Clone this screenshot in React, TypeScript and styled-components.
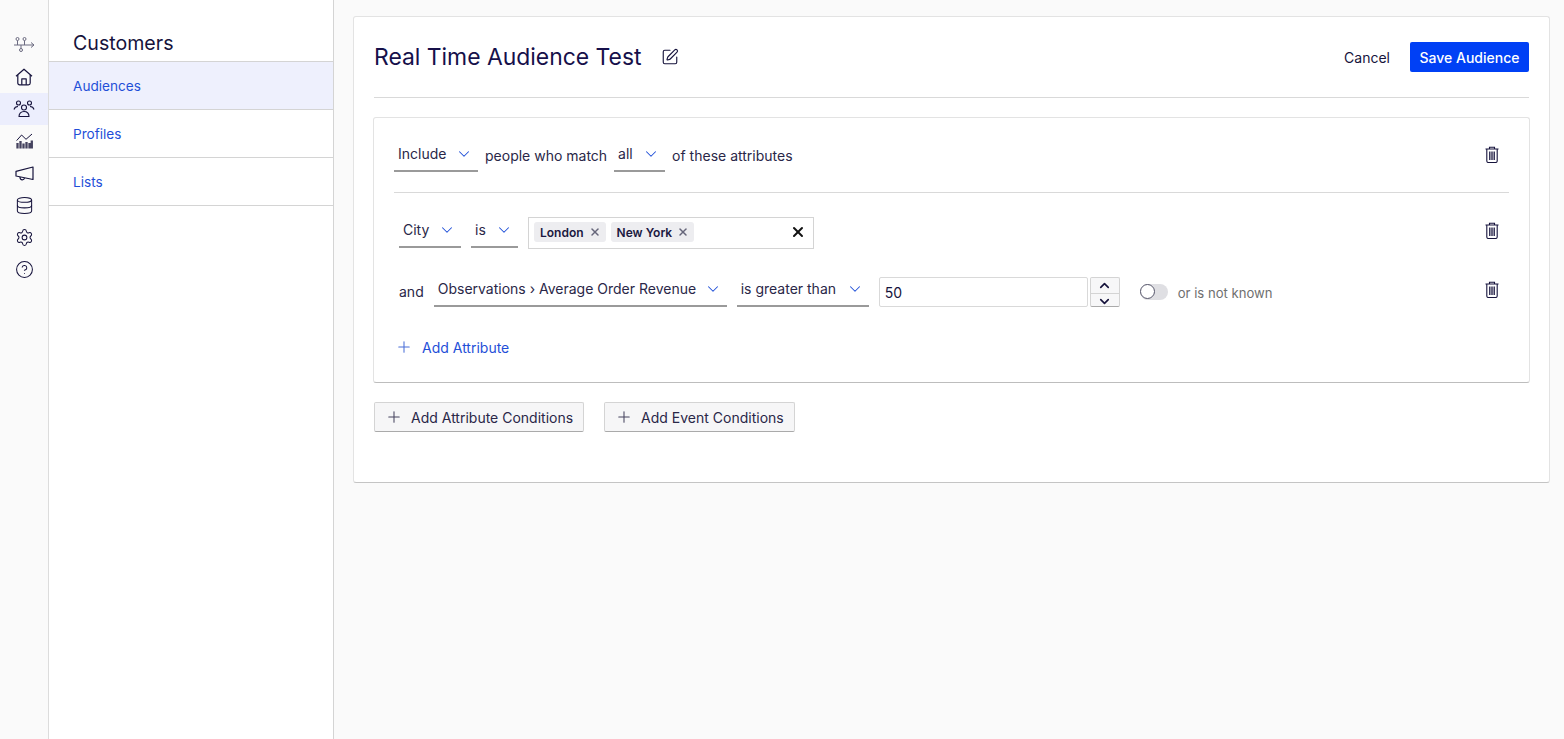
import React from "react";
import styled, { createGlobalStyle } from "styled-components";
import { ChevronDown, ChevronUp, CircleHelp, Database, Plus, Settings, SquarePen, X } from "lucide-react";

const GlobalStyle = createGlobalStyle`
  html, body { margin: 0; height: 100%; }
  body {
    background: #fafafa;
    color: #16133c;
    font-family: Inter, "Noto Sans", sans-serif;
    font-size: 14px;
    overflow: hidden;
  }
`;

const FlowIcon = () => (
  <svg width="22" height="18" viewBox="0 0 22 18" fill="none" stroke="#6b6a80" strokeWidth="1">
    <path d="M1 9h20M18 6.500l3 2.500-3 2.500" />
    <circle cx="4.500" cy="3" r="1.500" />
    <circle cx="11.500" cy="3" r="1.500" />
    <circle cx="8" cy="14" r="1.500" />
    <path d="M4.500 4.500V9M11.500 4.500V9M8 9v3.500" />
  </svg>
);

const HomeIcon = () => (
  <svg width="18" height="18" viewBox="0 0 18 18" fill="none" stroke="#16133c" strokeWidth="1.200" strokeLinejoin="round">
    <path d="M1 8.300 9 1.200l8 7.100" />
    <path d="M2.800 7v8a1.800 1.800 0 0 0 1.800 1.800h8.800a1.800 1.800 0 0 0 1.800-1.800V7" />
    <path d="M6.800 16.800v-6h4.400v6" />
  </svg>
);

const PeopleIcon = () => (
  <svg width="22" height="18" viewBox="0 0 22 18" fill="none" stroke="#16133c" strokeWidth="1.100">
    <circle cx="5.500" cy="3" r="2" />
    <circle cx="16.500" cy="3" r="2" />
    <circle cx="11" cy="7.500" r="2.500" />
    <path d="M1 9.500c.5-2 2-3 4-3M21 9.500c-.5-2-2-3-4-3" />
    <path d="M6 16.500c0-3 2-5 5-5s5 2 5 5z" strokeLinejoin="round" />
  </svg>
);

const ChartIcon = () => (
  <svg width="18" height="16" viewBox="0 0 18 16" fill="none" stroke="#16133c" strokeWidth="1">
    <path d="M1.600 7.600 6.600 2 11 6.300 17 1" />
    <path d="M2.500 15.500V10M5.500 15.500V8M8.500 15.500V10.500M11.500 15.500V9M14.500 15.500V10M16.800 15.500V7.500" strokeWidth="2.300" stroke="#45435f" />
  </svg>
);

const MegaphoneIcon = () => (
  <svg width="19" height="15" viewBox="0 0 19 15" fill="none" stroke="#16133c" strokeWidth="1.200" strokeLinejoin="round">
    <path d="M18 1v12.500L1 10V5.300z" />
    <path d="M5 11c0 2 1 2.800 2.300 2.800 1.200 0 2-.8 2.200-1.800" />
  </svg>
);

const TrashIcon = () => (
  <svg width="14" height="17" viewBox="0 0 14 17" fill="none" stroke="#16133c" strokeWidth="1.100">
    <path d="M.5 3h13M4.500 3V1.200h5V3" />
    <path d="M1.800 3v12a1.500 1.500 0 0 0 1.500 1.500h7.400a1.500 1.500 0 0 0 1.500-1.500V3" />
    <path d="M4.800 5.500v8.500M7 5.500v8.500M9.200 5.500v8.500" strokeWidth="1.300" />
  </svg>
);

const Page = styled.div`
  display: flex;
  height: 739px;
`;

const Rail = styled.nav`
  box-sizing: border-box;
  width: 49px;
  flex: none;
  padding-top: 29px;
  background: #fafafa;
  border-right: 1px solid #dcdcdc;
  display: flex;
  flex-direction: column;
`;

const RailItem = styled.div<{ $active?: boolean }>`
  height: 32px;
  display: flex;
  align-items: center;
  justify-content: center;
  color: #16133c;
  background: ${(p) => (p.$active ? "#eceefd" : "transparent")};
`;

const SideNav = styled.aside`
  box-sizing: border-box;
  width: 285px;
  flex: none;
  background: #fff;
  border-right: 1px solid #d4d4d4;
`;

const SideTitle = styled.h2`
  margin: 0;
  height: 62px;
  box-sizing: border-box;
  padding: 31px 0 0 24px;
  font-size: 19.6px;
  line-height: 24px;
  font-weight: 400;
  border-bottom: 1px solid #d4d4d4;
`;

const SideLink = styled.a<{ $active?: boolean }>`
  box-sizing: border-box;
  display: flex;
  align-items: center;
  height: 48px;
  padding-left: 24px;
  font-size: 13.6px;
  color: #1f4fd8;
  border-bottom: 1px solid #d4d4d4;
  background: ${(p) => (p.$active ? "#eef0fd" : "#fff")};
`;

const Main = styled.main`
  flex: 1;
  padding: 16px 14px 0 19px;
`;

const Card = styled.section`
  box-sizing: border-box;
  height: 467px;
  background: #fff;
  border: 1px solid #e3e3e3;
  border-bottom: 1px solid #c4c4c4;
  border-radius: 3px;
  padding: 25px 19px 0 20px;
`;

const Header = styled.header`
  display: flex;
  align-items: center;
  height: 30px;
  margin-right: 1px;
  padding-bottom: 25px;
  border-bottom: 1px solid #d9d9d9;
`;

const Title = styled.h1`
  margin: 0;
  font-size: 22.9px;
  line-height: 30px;
  font-weight: 400;
  color: #16104a;
`;

const EditButton = styled.span`
  display: flex;
  margin-left: 20px;
`;

const HeaderActions = styled.div`
  margin-left: auto;
  display: flex;
  align-items: center;
  gap: 20px;
`;

const CancelLink = styled.span`
  font-size: 14px;
`;

const PrimaryButton = styled.button`
  height: 30px;
  width: 119px;
  border: 0;
  padding: 0;
  border-radius: 2px;
  background: #0040f5;
  color: #fff;
  font: 500 14px Inter, sans-serif;
`;

const ConditionBox = styled.div`
  box-sizing: border-box;
  height: 266px;
  margin: 19px 0 0 -1px;
  padding: 0 20px 0 20px;
  border: 1px solid #e3e3e3;
  border-bottom: 1px solid #bdbdbd;
  border-radius: 3px;
`;

const GroupRow = styled.div`
  display: flex;
  align-items: flex-start;
  height: 75px;
  box-sizing: border-box;
  padding-top: 23px;
  border-bottom: 1px solid #d9d9d9;
`;

const Row = styled.div<{ $top: number }>`
  display: flex;
  align-items: flex-start;
  margin-top: ${(p) => p.$top}px;
  padding-left: 5px;
`;

const Select = styled.div<{ $width: number; $gap?: number }>`
  box-sizing: border-box;
  width: ${(p) => p.$width}px;
  height: 31px;
  margin-right: ${(p) => p.$gap ?? 7}px;
  padding: 4px 4px 0;
  display: flex;
  align-items: flex-start;
  justify-content: space-between;
  border-bottom: 2px solid #9a9a9a;
  font-size: 14px;
  line-height: 17px;
  color: #2a2748;
  svg { color: #1f4fd8; margin: 0 1px 0 0; flex: none; }
`;

const Word = styled.span<{ $top: number; $gap: number }>`
  padding-top: ${(p) => p.$top}px;
  margin-right: ${(p) => p.$gap}px;
  font-size: 14px;
  line-height: 17px;
  color: #2a2748;
`;

const DeleteButton = styled.span<{ $top: number }>`
  margin-left: auto;
  margin-right: 10px;
  padding-top: ${(p) => p.$top}px;
  display: flex;
`;

const MultiInput = styled.div`
  box-sizing: border-box;
  width: 286px;
  height: 32px;
  margin-left: 3px;
  padding: 0 7px 2px 5px;
  display: flex;
  align-items: center;
  gap: 5px;
  border: 1px solid #d4d4d4;
`;

const Tag = styled.span`
  display: flex;
  align-items: center;
  gap: 5px;
  height: 20px;
  padding: 0 5px 0 6px;
  border-radius: 3px;
  background: #ededf0;
  font-size: 12px;
  font-weight: 600;
  color: #1b1840;
  svg { color: #66667a; }
`;

const ClearAll = styled.span`
  margin-left: auto;
  display: flex;
`;

const NumberInput = styled.div`
  box-sizing: border-box;
  width: 209px;
  height: 30px;
  margin: 1px 0 0 3px;
  padding-left: 5px;
  display: flex;
  align-items: center;
  border: 1px solid #d9d9d9;
  border-radius: 2px;
  font-size: 14px;
`;

const Stepper = styled.div`
  box-sizing: border-box;
  width: 30px;
  height: 30px;
  margin: 1px 0 0 2px;
  display: flex;
  flex-direction: column;
  background: #f7f7f8;
  border: 1px solid #d4d4d4;
  border-bottom-color: #aaa;
  border-radius: 2px;
`;

const StepButton = styled.span<{ $first?: boolean }>`
  flex: 1;
  display: flex;
  align-items: center;
  justify-content: center;
  border-bottom: ${(p) => (p.$first ? "1px solid #d4d4d4" : "0")};
`;

const Toggle = styled.span`
  position: relative;
  width: 28px;
  height: 16px;
  margin: 8px 10px 0 20px;
  border-radius: 8px;
  background: #dfdfe3;
  &::before {
    content: "";
    position: absolute;
    left: 0;
    top: 0;
    box-sizing: border-box;
    width: 15px;
    height: 15px;
    border-radius: 50%;
    border: 1px solid #55556a;
    background: #fff;
  }
`;

const ToggleLabel = styled.span`
  padding-top: 9px;
  font-size: 13.1px;
  line-height: 16px;
  color: #6f6f6f;
`;

const AddAttribute = styled.div`
  display: flex;
  align-items: center;
  gap: 9px;
  margin: 31px 0 0 1px;
  font-size: 14px;
  color: #1f4fd8;
  svg { color: #4a6fd8; }
`;

const Footer = styled.div`
  display: flex;
  gap: 20px;
  margin-top: 19px;
`;

const GhostButton = styled.button`
  box-sizing: border-box;
  height: 30px;
  display: flex;
  align-items: center;
  gap: 8px;
  padding: 0 10px 0 10px;
  background: #f6f6f7;
  border: 1px solid #d4d4d4;
  border-bottom-color: #aaa;
  border-radius: 2px;
  font: 400 14px Inter, sans-serif;
  color: #2a2748;
  svg { color: #45435f; }
`;

const Chevron = () => <ChevronDown size={18} strokeWidth={1.4} />;

export default function App() {
  return (
    <>
      <GlobalStyle />
      <Page>
        <Rail>
          <RailItem><FlowIcon /></RailItem>
          <RailItem><HomeIcon /></RailItem>
          <RailItem $active><PeopleIcon /></RailItem>
          <RailItem><ChartIcon /></RailItem>
          <RailItem><MegaphoneIcon /></RailItem>
          <RailItem><Database size={19} strokeWidth={1.3} /></RailItem>
          <RailItem><Settings size={19} strokeWidth={1.3} /></RailItem>
          <RailItem><CircleHelp size={19} strokeWidth={1.3} /></RailItem>
        </Rail>
        <SideNav>
          <SideTitle>Customers</SideTitle>
          <SideLink $active>Audiences</SideLink>
          <SideLink>Profiles</SideLink>
          <SideLink>Lists</SideLink>
        </SideNav>
        <Main>
          <Card>
            <Header>
              <Title>Real Time Audience Test</Title>
              <EditButton><SquarePen size={18} strokeWidth={1.5} /></EditButton>
              <HeaderActions>
                <CancelLink>Cancel</CancelLink>
                <PrimaryButton>Save Audience</PrimaryButton>
              </HeaderActions>
            </Header>
            <ConditionBox>
              <GroupRow>
                <Select $width={84}>Include <Chevron /></Select>
                <Word $top={6} $gap={7}>people who match</Word>
                <Select $width={51}>all <Chevron /></Select>
                <Word $top={6} $gap={0}>of these attributes</Word>
                <DeleteButton $top={5}><TrashIcon /></DeleteButton>
              </GroupRow>
              <Row $top={24}>
                <Select $width={62} $gap={10}>City <Chevron /></Select>
                <Select $width={47}>is <Chevron /></Select>
                <MultiInput>
                  <Tag>London <X size={12} strokeWidth={3} /></Tag>
                  <Tag>New York <X size={12} strokeWidth={3} /></Tag>
                  <ClearAll><X size={16} strokeWidth={3} color="#111" /></ClearAll>
                </MultiInput>
                <DeleteButton $top={5}><TrashIcon /></DeleteButton>
              </Row>
              <Row $top={27}>
                <Word $top={7} $gap={10}>and</Word>
                <Select $width={293} $gap={10}>Observations › Average Order Revenue <Chevron /></Select>
                <Select $width={132}>is greater than <Chevron /></Select>
                <NumberInput>50</NumberInput>
                <Stepper>
                  <StepButton $first><ChevronUp size={15} strokeWidth={2.6} /></StepButton>
                  <StepButton><ChevronDown size={15} strokeWidth={2.6} /></StepButton>
                </Stepper>
                <Toggle />
                <ToggleLabel>or is not known</ToggleLabel>
                <DeleteButton $top={5}><TrashIcon /></DeleteButton>
              </Row>
              <AddAttribute><Plus size={18} strokeWidth={1.4} />Add Attribute</AddAttribute>
            </ConditionBox>
            <Footer>
              <GhostButton><Plus size={18} strokeWidth={1.4} />Add Attribute Conditions</GhostButton>
              <GhostButton><Plus size={18} strokeWidth={1.4} />Add Event Conditions</GhostButton>
            </Footer>
          </Card>
        </Main>
      </Page>
    </>
  );
}
